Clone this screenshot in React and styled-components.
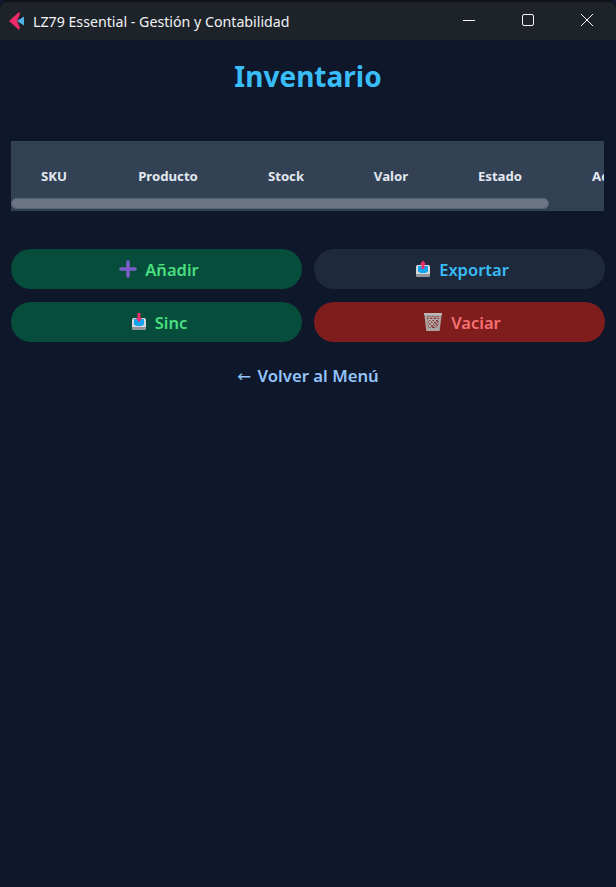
import React from "react";
import styled, { createGlobalStyle } from "styled-components";

const GlobalStyle = createGlobalStyle`
  html, body {
    margin: 0;
    padding: 0;
    height: 100%;
    background: #0f172a;
    overflow: hidden;
  }
  #root {
    height: 100%;
  }
`;

const Window = styled.div`
  display: flex;
  flex-direction: column;
  height: 887px;
  background: #0f172a;
  font-family: "Noto Sans", "Open Sans", "Liberation Sans", sans-serif;
`;

const TitleBar = styled.header`
  display: flex;
  align-items: center;
  flex: none;
  height: 38px;
  padding-left: 9px;
  background: #1e2329;
  border-top: 2px solid #111417;
  border-radius: 8px 8px 0 0;
`;

const AppTitle = styled.span`
  flex: 1;
  margin-left: 9px;
  font-size: 14.2px;
  color: #f1f3f5;
  white-space: nowrap;
`;

const WindowButton = styled.button`
  display: flex;
  align-items: center;
  justify-content: center;
  width: 59px;
  height: 38px;
  padding: 0;
  border: 0;
  background: none;
  color: #f1f3f5;
  transform: translateY(-1px);
`;

const Content = styled.main`
  display: flex;
  flex-direction: column;
  padding: 0 11px;
`;

const Heading = styled.h1`
  margin: 17px 0 0;
  font-size: 28px;
  line-height: 38px;
  font-weight: 700;
  text-align: center;
  color: #38bdf8;
`;

const TableCard = styled.div`
  margin: 46px 1px 0 0;
  background: #334155;
`;

const TableViewport = styled.div`
  overflow: hidden;
`;

const Table = styled.table`
  width: 653px;
  table-layout: fixed;
  border-collapse: collapse;
`;

const HeadCell = styled.th`
  width: ${(p) => p.$width}px;
  height: 44px;
  padding: ${(p) => (p.$left ? "13px 0 0 41px" : "13px 0 0")};
  font-size: 13.2px;
  font-weight: 700;
  text-align: ${(p) => (p.$left ? "left" : "center")};
  color: #e2e8f0;
  white-space: nowrap;
`;

const ScrollTrack = styled.div`
  height: 13px;
`;

const ScrollThumb = styled.div`
  width: 538px;
  height: 11px;
  box-sizing: border-box;
  background: #6b7485;
  border: 1px solid #566375;
  border-radius: 6px;
`;

const ButtonGrid = styled.div`
  display: grid;
  grid-template-columns: 1fr 1fr;
  gap: 13px 12px;
  margin-top: 38px;
`;

const tones = {
  green: { bg: "#064e3b", fg: "#4ade80" },
  slate: { bg: "#1e293b", fg: "#38bdf8" },
  red: { bg: "#7f1d1d", fg: "#f87171" },
};

const ActionButton = styled.button`
  display: flex;
  align-items: center;
  justify-content: center;
  gap: 8px;
  height: 40px;
  padding: 0 0 0 5px;
  border: 0;
  border-radius: 20px;
  font-family: inherit;
  font-size: 16.5px;
  font-weight: 600;
  background: ${(p) => tones[p.$tone].bg};
  color: ${(p) => tones[p.$tone].fg};
`;

const BackLink = styled.a`
  margin-top: 21px;
  font-size: 16.7px;
  line-height: 26px;
  font-weight: 600;
  text-align: center;
  color: #93c5fd;
  text-decoration: none;
`;

const BackArrow = styled.span`
  margin-right: 2px;
  font-family: "DejaVu Sans", sans-serif;
  font-weight: 400;
`;

const columns = [
  { label: "SKU", width: 86 },
  { label: "Producto", width: 142 },
  { label: "Stock", width: 94 },
  { label: "Valor", width: 116 },
  { label: "Estado", width: 102 },
  { label: "Acciones", width: 113, left: true },
];

function AppLogo() {
  return (
    <svg width="15" height="18" viewBox="0 0 15 18">
      <path d="M0 9 10 0 11 2 8 9 11 16 10 18Z" fill="#ee2a68" />
      <path d="M8 9 15 4.500V13.500Z" fill="#4fb3e8" />
    </svg>
  );
}

function PlusIcon() {
  return (
    <svg width="18" height="18" viewBox="0 0 18 18">
      <path d="M9 2v14M2 9h14" stroke="#7b5cc9" strokeWidth="3.6" strokeLinecap="round" />
    </svg>
  );
}

// bandeja con flecha, up = sale (exportar), si no entra (sinc)
function TrayIcon({ up }) {
  return (
    <svg width="16" height="18" viewBox="0 0 16 18">
      <path d="M1 6.500 2 5h12l1 1.500V15a2 2 0 0 1-2 2H3a2 2 0 0 1-2-2Z" fill="#d5d8da" />
      <path d="M1 14h14v1a2 2 0 0 1-2 2H3a2 2 0 0 1-2-2Z" fill="#8f979c" />
      <path d="M3 6h10v5.500L10.500 13h-5L3 11.500Z" fill="#0fa5ee" />
      {up ? (
        <path d="M8 0.500 11 4.500H9.500V9h-3V4.500H5Z" fill="#f0306a" />
      ) : (
        <path d="M6.500 0h3v5H11L8 9.500 5 5h1.500Z" fill="#f0306a" />
      )}
    </svg>
  );
}

function TrashIcon() {
  return (
    <svg width="20" height="20" viewBox="0 0 18 18">
      <path d="M1 1h16l-2 16H3Z" fill="#a9a4a2" />
      <path d="M3.500 3.500h11l-1.300 11H4.800Z" fill="#8a3a3a" />
      <path
        d="M4 4l9.500 10M7.500 4l6 7M11 4l3.500 4M14 4 4.800 14M10.500 4 4.300 11M7 4 3.800 8M4.500 7.500l7.500 7M8 14.500l-3.500-4"
        stroke="#b5b0ae"
        strokeWidth="1"
      />
      <path d="M1 1h16v1.800H1Z" fill="#bdb9b7" />
    </svg>
  );
}

export default function App() {
  return (
    <Window>
      <GlobalStyle />
      <TitleBar>
        <AppLogo />
        <AppTitle>LZ79 Essential - Gestión y Contabilidad</AppTitle>
        <WindowButton aria-label="Minimizar">
          <svg width="12" height="12" viewBox="0 0 12 12">
            <path d="M0 6.500h12" stroke="currentColor" />
          </svg>
        </WindowButton>
        <WindowButton aria-label="Maximizar">
          <svg width="12" height="12" viewBox="0 0 12 12">
            <rect x="0.500" y="0.500" width="11" height="11" rx="1.500" fill="none" stroke="currentColor" />
          </svg>
        </WindowButton>
        <WindowButton aria-label="Cerrar">
          <svg width="12" height="12" viewBox="0 0 12 12">
            <path d="M0 0l12 12M12 0 0 12" stroke="currentColor" />
          </svg>
        </WindowButton>
      </TitleBar>
      <Content>
        <Heading>Inventario</Heading>
        <TableCard>
          <TableViewport>
            <Table>
              <thead>
                <tr>
                  {columns.map((col) => (
                    <HeadCell key={col.label} $width={col.width} $left={col.left}>
                      {col.label}
                    </HeadCell>
                  ))}
                </tr>
              </thead>
            </Table>
          </TableViewport>
          <ScrollTrack>
            <ScrollThumb />
          </ScrollTrack>
        </TableCard>
        <ButtonGrid>
          <ActionButton $tone="green">
            <PlusIcon />
            Añadir
          </ActionButton>
          <ActionButton $tone="slate">
            <TrayIcon up />
            Exportar
          </ActionButton>
          <ActionButton $tone="green">
            <TrayIcon />
            Sinc
          </ActionButton>
          <ActionButton $tone="red">
            <TrashIcon />
            Vaciar
          </ActionButton>
        </ButtonGrid>
        <BackLink href="#">
          <BackArrow>←</BackArrow> Volver al Menú
        </BackLink>
      </Content>
    </Window>
  );
}
